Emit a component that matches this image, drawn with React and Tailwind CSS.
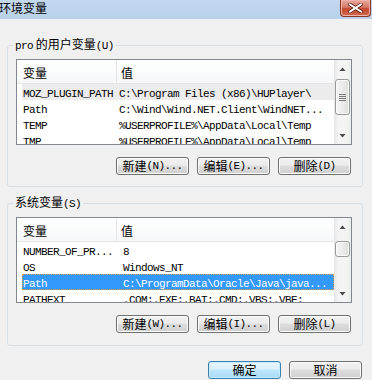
import React from 'react';

const cjk = "font-['Noto_Sans_CJK_SC','Noto_Sans_CJK_JP',sans-serif]";

// SimSun-like half-width run
function M({ children }) {
  return <span className="font-['Liberation_Mono',monospace] text-[11px] tracking-[-0.6px]">{children}</span>;
}

function Btn({ children, primary }) {
  return (
    <button
      className={
        primary
          ? "w-[73px] h-[18px] rounded-[3px] border border-[#3c7fb1] bg-[linear-gradient(#eaf6fd_0%,#d9f0fc_45%,#bee6fd_50%,#a7d9f5_100%)] shadow-[inset_0_0_0_1px_#c4ecfb] flex items-center justify-center text-[12px] leading-[14px] text-black"
          : "w-[73px] h-[18px] rounded-[3px] border border-[#707070] bg-[linear-gradient(#f2f2f2_0%,#ebebeb_45%,#dddddd_50%,#cfcfcf_100%)] shadow-[inset_0_0_0_1px_#fcfcfc] flex items-center justify-center text-[12px] leading-[14px] text-black"
      }
    >
      {children}
    </button>
  );
}

function Arrow({ down }) {
  return (
    <div className="h-[17px] flex items-center justify-center shrink-0">
      <svg width="7" height="4" viewBox="0 0 7 4">
        <polygon points={down ? '0.5,0 6.5,0 3.5,3.5' : '0.5,4 6.5,4 3.5,0.5'} fill="#4a4a4a" />
      </svg>
    </div>
  );
}

function ScrollBar({ thumbTop, thumbH, grip }) {
  return (
    <div className="w-[17px] shrink-0 flex flex-col bg-[linear-gradient(90deg,#e6e6e6,#f4f4f4_25%,#f4f4f4_75%,#ececec)]">
      <Arrow />
      <div
        className={
          thumbTop === 2
            ? 'mt-[2px] h-[36px] mx-[1px] rounded-[3px] border border-[#9a9a9a] bg-[linear-gradient(90deg,#f5f5f5,#ececec_50%,#dcdcdc)] shadow-[inset_0_0_0_1px_#fafafa] flex flex-col items-center justify-center gap-[1px]'
            : 'mt-[6px] h-[16px] mx-[1px] rounded-[3px] border border-[#9a9a9a] bg-[linear-gradient(90deg,#f5f5f5,#ececec_50%,#dcdcdc)] shadow-[inset_0_0_0_1px_#fafafa] flex flex-col items-center justify-center gap-[1px]'
        }
      >
        {grip && (
          <>
            <div className="w-[7px] h-[1px] bg-[#7a7a7a]" />
            <div className="w-[7px] h-[1px] bg-[#7a7a7a]" />
            <div className="w-[7px] h-[1px] bg-[#7a7a7a]" />
            <div className="w-[7px] h-[1px] bg-[#7a7a7a]" />
          </>
        )}
      </div>
      <div className="mt-auto">
        <Arrow down />
      </div>
    </div>
  );
}

function ListView({ rows, valuePad, thumbTop, thumbH, grip }) {
  return (
    <div className="h-[86px] border border-[#828790] bg-white flex overflow-hidden">
      <div className="flex-1 min-w-0 flex flex-col">
        <div className={`h-[24px] shrink-0 flex border-b border-[#e5e5e5] bg-[linear-gradient(#ffffff,#f6f7f9)] text-[12px] leading-[14px] ${cjk}`}>
          <div className="w-[100px] border-r border-[#e5e5e5] pl-[6px] pt-[3px] flex items-center">变量</div>
          <div className="pl-[4px] pt-[3px] flex items-center">值</div>
        </div>
        {rows.map((r) => (
          <div
            key={r.name}
            className={
              r.sel === 'active'
                ? 'ml-[5px] h-[16px] shrink-0 flex items-center whitespace-nowrap overflow-hidden bg-[#3399ff] text-white outline outline-1 outline-dotted outline-[#f0a040] -outline-offset-1'
                : r.sel === 'inactive'
                ? 'ml-[5px] h-[16px] shrink-0 flex items-center whitespace-nowrap overflow-hidden bg-[#ececec] text-black'
                : 'ml-[5px] h-[16px] shrink-0 flex items-center whitespace-nowrap overflow-hidden text-black'
            }
          >
            <div className="w-[95px] shrink-0 pl-[1px] leading-[14px]">
              <M>{r.name}</M>
            </div>
            <div className={valuePad === 'wide' ? 'pl-[6px] leading-[14px]' : 'pl-[2px] leading-[14px]'}>
              <M>{r.value}</M>
            </div>
          </div>
        ))}
      </div>
      <ScrollBar thumbTop={thumbTop} thumbH={thumbH} grip={grip} />
    </div>
  );
}

const userRows = [
  { name: 'MOZ_PLUGIN_PATH', value: 'C:\\Program Files (x86)\\HUPlayer\\', sel: 'inactive' },
  { name: 'Path', value: 'C:\\Wind\\Wind.NET.Client\\WindNET...' },
  { name: 'TEMP', value: '%USERPROFILE%\\AppData\\Local\\Temp' },
  { name: 'TMP', value: '%USERPROFILE%\\AppData\\Local\\Temp' },
];

const sysRows = [
  { name: 'NUMBER_OF_PR...', value: '8' },
  { name: 'OS', value: 'Windows_NT' },
  { name: 'Path', value: 'C:\\ProgramData\\Oracle\\Java\\java...', sel: 'active' },
  { name: 'PATHEXT', value: '.COM;.EXE;.BAT;.CMD;.VBS;.VBE;' },
];

export default function App() {
  return (
    <div className={`w-[372px] h-[380px] bg-[#f0f0f0] overflow-hidden text-black ${cjk}`}>
      {/* title bar */}
      <div className="h-[19px] flex items-start justify-between bg-[linear-gradient(#c4d8ef,#b9d1ea)]">
        <div className="text-[12px] leading-[14px] pt-[1px] -ml-[1px]">环境变量</div>
        <div className="mr-[1px] w-[31px] h-[17px] rounded-b-[4px] border border-t-0 border-[#8a3328] bg-[linear-gradient(#e8a99e,#d77a6a_45%,#c4462f_55%,#cf6a4f)] shadow-[inset_0_0_0_1px_#eeb4a8] flex items-center justify-center">
          <svg width="15" height="10" viewBox="0 0 15 10">
            <path d="M2 1.5 L13 8.5 M13 1.5 L2 8.5" stroke="#5a1e16" strokeWidth="3.6" strokeLinecap="square" />
            <path d="M2 1.5 L13 8.5 M13 1.5 L2 8.5" stroke="#ffffff" strokeWidth="2" strokeLinecap="square" />
          </svg>
        </div>
      </div>

      {/* user variables */}
      <fieldset className="mt-[18px] ml-[7px] w-[356px] border border-[#d5dfe5] rounded-[3px] pl-[8px] pr-[10px] pt-[6px] pb-[11px]">
        <legend className="-ml-[3px] px-[2px] text-[12px] leading-[14px]">
          <M>pro</M> 的用户变量<M>(U)</M>
        </legend>
        <ListView rows={userRows} valuePad="narrow" thumbTop={2} grip />
        <div className="mt-[12px] flex justify-end gap-[8px] pr-[1px]">
          <Btn>新建<M>(N)...</M></Btn>
          <Btn>编辑<M>(E)...</M></Btn>
          <Btn>删除<M>(D)</M></Btn>
        </div>
      </fieldset>

      {/* system variables */}
      <fieldset className="mt-[8px] ml-[7px] w-[356px] border border-[#d5dfe5] rounded-[3px] pl-[8px] pr-[10px] pt-[6px] pb-[12px]">
        <legend className="-ml-[3px] px-[2px] text-[12px] leading-[14px]">
          系统变量<M>(S)</M>
        </legend>
        <ListView rows={sysRows} valuePad="wide" thumbTop={6} />
        <div className="mt-[12px] flex justify-end gap-[8px] pr-[1px]">
          <Btn>新建<M>(W)...</M></Btn>
          <Btn>编辑<M>(I)...</M></Btn>
          <Btn>删除<M>(L)</M></Btn>
        </div>
      </fieldset>

      {/* dialog buttons */}
      <div className="mt-[15px] flex justify-end gap-[8px] pr-[10px]">
        <Btn primary>确定</Btn>
        <Btn>取消</Btn>
      </div>
    </div>
  );
}
